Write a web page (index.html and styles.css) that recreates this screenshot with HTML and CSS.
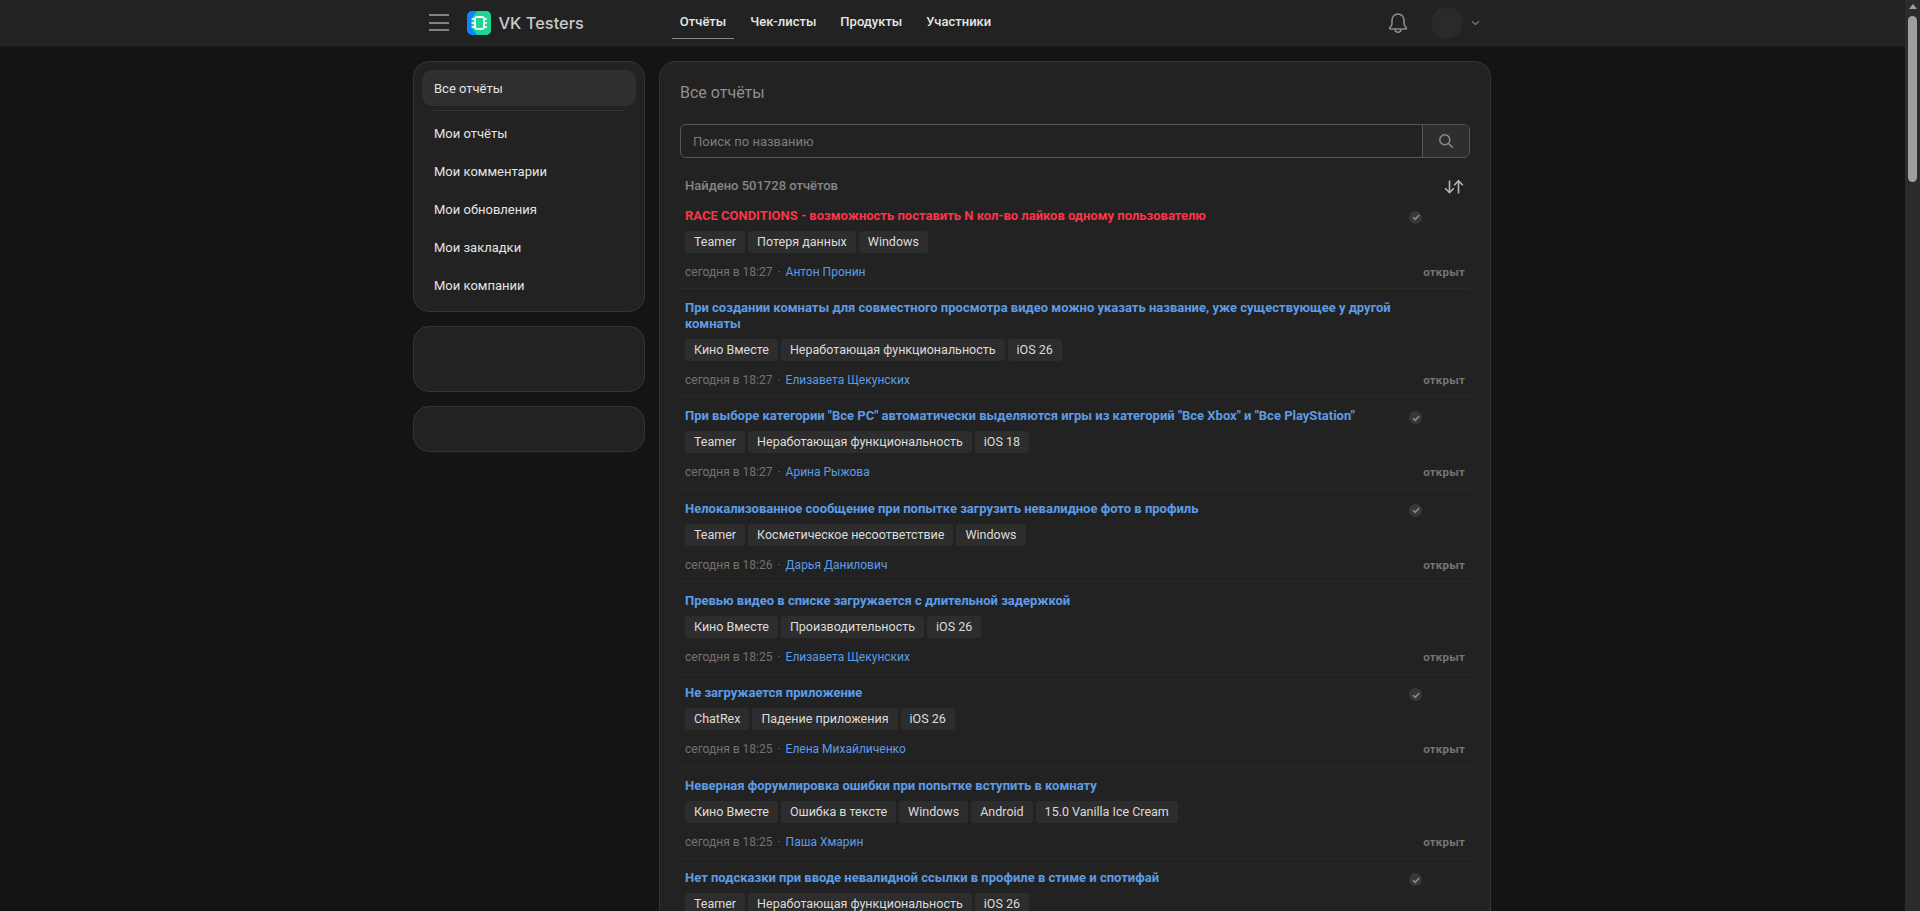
FILE: index.html
```html
<!DOCTYPE html>
<html lang="ru">
<head>
<meta charset="utf-8">
<title>VK Testers</title>
<link rel="stylesheet" href="styles.css">
</head>
<body>
<div class="viewport">
  <div class="page">
    <header class="topbar">
      <div class="topbar-inner">
        <button class="burger" aria-label="Меню"><span></span><span></span><span></span></button>
        <a class="brand">
          <svg class="logo" viewBox="0 0 24 24" width="24" height="24">
            <defs><clipPath id="lc"><rect width="24" height="24" rx="5"/></clipPath></defs>
            <g clip-path="url(#lc)">
              <rect width="24" height="24" fill="#0a84ff"/>
              <circle cx="19" cy="12" r="14.5" fill="#1ed68f"/>
            </g>
            <rect x="8" y="6" width="9" height="12" rx="2" fill="none" stroke="#fff" stroke-width="1.8"/>
            <path d="M4.5 8h3M4.5 12h3M4.5 16h3M17 8h3M17 12h3M17 16h3" stroke="#fff" stroke-width="1.6"/>
          </svg>
          <span class="brand-name">VK Testers</span>
        </a>
        <nav class="nav">
          <a class="nav-link active">Отчёты</a>
          <a class="nav-link">Чек-листы</a>
          <a class="nav-link">Продукты</a>
          <a class="nav-link">Участники</a>
        </nav>
        <div class="top-actions">
          <svg class="bell" viewBox="0 0 20 22" width="20" height="22" fill="none" stroke="#8c8c8c" stroke-width="1.6" stroke-linejoin="round">
            <path d="M10 2a6 6 0 0 0-6 6v3.6c0 1.6-1.1 3-2.3 4.2-.4.4-.1 1.2.5 1.2h15.6c.6 0 .9-.8.5-1.2-1.2-1.2-2.3-2.6-2.3-4.2V8a6 6 0 0 0-6-6Z"/>
            <path d="M7 17.2c0 1.8 1.3 3 3 3s3-1.2 3-3"/>
          </svg>
          <div class="avatar"></div>
          <svg class="chev" viewBox="0 0 10 6" width="9" height="6" fill="none" stroke="#777" stroke-width="1.3"><path d="M1 1l4 3.6L9 1"/></svg>
        </div>
      </div>
    </header>
    <div class="layout">
      <aside class="side">
        <div class="card side-menu">
          <a class="side-item current">Все отчёты</a>
          <div class="side-sep"></div>
          <a class="side-item">Мои отчёты</a>
          <a class="side-item">Мои комментарии</a>
          <a class="side-item">Мои обновления</a>
          <a class="side-item">Мои закладки</a>
          <a class="side-item">Мои компании</a>
        </div>
        <div class="card side-blank-a"></div>
        <div class="card side-blank-b"></div>
      </aside>
      <main class="card main">
        <h1 class="heading">Все отчёты</h1>
        <form class="search">
          <div class="search-input">Поиск по названию</div>
          <div class="search-btn">
            <svg viewBox="0 0 16 16" width="16" height="16" fill="none" stroke="#8e8e8e" stroke-width="1.4"><circle cx="6.8" cy="6.8" r="5"/><path d="M10.5 10.5l4.3 4.3"/></svg>
          </div>
        </form>
        <div class="found">
          <span>Найдено 501728 отчётов</span>
          <svg class="sort" viewBox="0 0 20 14" width="20" height="14" fill="none" stroke="#b5b5b5" stroke-width="1.6"><path d="M5.5 0.5v12M1.2 8.2l4.3 4.5 4.3-4.5M14.5 13.5v-12.5M10.2 5.3l4.3-4.5 4.3 4.5"/></svg>
        </div>
        <ul class="reports">
          <li class="report">
            <div class="report-body">
              <a class="r-title urgent">RACE CONDITIONS - возможность поставить N кол-во лайков одному пользователю</a>
              <div class="tags"><span class="tag">Teamer</span><span class="tag">Потеря данных</span><span class="tag">Windows</span></div>
              <div class="meta"><span class="when">сегодня в 18:27</span><span class="dot">·</span><a class="author">Антон Пронин</a></div>
            </div>
            <div class="r-side"><span class="check"><svg viewBox="0 0 12 12" width="12" height="12"><path d="M3 6.2l2.2 2.2L9.2 4" fill="none" stroke="#8a8a8a" stroke-width="1.6"/></svg></span><span class="status">открыт</span></div>
          </li>
          <li class="report">
            <div class="report-body">
              <a class="r-title">При создании комнаты для совместного просмотра видео можно указать название, уже существующее у другой комнаты</a>
              <div class="tags"><span class="tag">Кино Вместе</span><span class="tag">Неработающая функциональность</span><span class="tag">iOS 26</span></div>
              <div class="meta"><span class="when">сегодня в 18:27</span><span class="dot">·</span><a class="author">Елизавета Щекунских</a></div>
            </div>
            <div class="r-side"><span class="status">открыт</span></div>
          </li>
          <li class="report">
            <div class="report-body">
              <a class="r-title">При выборе категории "Все PC" автоматически выделяются игры из категорий "Все Xbox" и "Все PlayStation"</a>
              <div class="tags"><span class="tag">Teamer</span><span class="tag">Неработающая функциональность</span><span class="tag">iOS 18</span></div>
              <div class="meta"><span class="when">сегодня в 18:27</span><span class="dot">·</span><a class="author">Арина Рыжова</a></div>
            </div>
            <div class="r-side"><span class="check"><svg viewBox="0 0 12 12" width="12" height="12"><path d="M3 6.2l2.2 2.2L9.2 4" fill="none" stroke="#8a8a8a" stroke-width="1.6"/></svg></span><span class="status">открыт</span></div>
          </li>
          <li class="report">
            <div class="report-body">
              <a class="r-title">Нелокализованное сообщение при попытке загрузить невалидное фото в профиль</a>
              <div class="tags"><span class="tag">Teamer</span><span class="tag">Косметическое несоответствие</span><span class="tag">Windows</span></div>
              <div class="meta"><span class="when">сегодня в 18:26</span><span class="dot">·</span><a class="author">Дарья Данилович</a></div>
            </div>
            <div class="r-side"><span class="check"><svg viewBox="0 0 12 12" width="12" height="12"><path d="M3 6.2l2.2 2.2L9.2 4" fill="none" stroke="#8a8a8a" stroke-width="1.6"/></svg></span><span class="status">открыт</span></div>
          </li>
          <li class="report">
            <div class="report-body">
              <a class="r-title">Превью видео в списке загружается с длительной задержкой</a>
              <div class="tags"><span class="tag">Кино Вместе</span><span class="tag">Производительность</span><span class="tag">iOS 26</span></div>
              <div class="meta"><span class="when">сегодня в 18:25</span><span class="dot">·</span><a class="author">Елизавета Щекунских</a></div>
            </div>
            <div class="r-side"><span class="status">открыт</span></div>
          </li>
          <li class="report">
            <div class="report-body">
              <a class="r-title">Не загружается приложение</a>
              <div class="tags"><span class="tag">ChatRex</span><span class="tag">Падение приложения</span><span class="tag">iOS 26</span></div>
              <div class="meta"><span class="when">сегодня в 18:25</span><span class="dot">·</span><a class="author">Елена Михайличенко</a></div>
            </div>
            <div class="r-side"><span class="check"><svg viewBox="0 0 12 12" width="12" height="12"><path d="M3 6.2l2.2 2.2L9.2 4" fill="none" stroke="#8a8a8a" stroke-width="1.6"/></svg></span><span class="status">открыт</span></div>
          </li>
          <li class="report">
            <div class="report-body">
              <a class="r-title">Неверная форумлировка ошибки при попытке вступить в комнату</a>
              <div class="tags"><span class="tag">Кино Вместе</span><span class="tag">Ошибка в тексте</span><span class="tag">Windows</span><span class="tag">Android</span><span class="tag">15.0 Vanilla Ice Cream</span></div>
              <div class="meta"><span class="when">сегодня в 18:25</span><span class="dot">·</span><a class="author">Паша Хмарин</a></div>
            </div>
            <div class="r-side"><span class="status">открыт</span></div>
          </li>
          <li class="report">
            <div class="report-body">
              <a class="r-title">Нет подсказки при вводе невалидной ссылки в профиле в стиме и спотифай</a>
              <div class="tags"><span class="tag">Teamer</span><span class="tag">Неработающая функциональность</span><span class="tag">iOS 26</span></div>
            </div>
            <div class="r-side"><span class="check"><svg viewBox="0 0 12 12" width="12" height="12"><path d="M3 6.2l2.2 2.2L9.2 4" fill="none" stroke="#8a8a8a" stroke-width="1.6"/></svg></span></div>
          </li>
        </ul>
      </main>
    </div>
  </div>
  <div class="scrollbar">
    <div class="sb-arrow"></div>
    <div class="sb-thumb"></div>
  </div>
</div>
</body>
</html>
```
FILE: styles.css
```css
* { box-sizing: border-box; }
html, body { margin: 0; height: 100%; overflow: hidden; }
body { background: #141414; color: #e1e3e6; font-family: Roboto, "Noto Sans", sans-serif; font-size: 13px; }
a { text-decoration: none; color: inherit; }
ul { list-style: none; margin: 0; padding: 0; }
h1 { margin: 0; font-weight: 400; }

.viewport { display: flex; height: 911px; overflow: hidden; }
.page { flex: 1; min-width: 0; }

.scrollbar { width: 15px; background: #2c2c2c; display: flex; flex-direction: column; align-items: center; flex-shrink: 0; }
.sb-arrow { margin-top: 4px; width: 0; height: 0; border-left: 4.5px solid transparent; border-right: 4.5px solid transparent; border-bottom: 5px solid #9e9e9e; }
.sb-thumb { margin-top: 7px; width: 9px; height: 166px; border-radius: 5px; background: #9e9e9e; }

.topbar { height: 46px; background: #222222; border-bottom: 1px solid #292929; }
.topbar-inner { width: 1078px; margin: 0 auto; height: 45px; display: flex; align-items: center; }

.burger { margin-left: 15px; width: 20px; height: 17px; padding: 0; background: none; border: 0; display: flex; flex-direction: column; justify-content: space-between; }
.burger span { display: block; height: 2px; background: #828282; }

.brand { margin-left: 18px; display: flex; align-items: center; gap: 8px; }
.logo { display: block; }
.brand-name { font-family: Inter, Roboto, sans-serif; font-size: 16.4px; font-weight: 500; color: #c9c9c9; }

.nav { margin-left: 88px; display: flex; gap: 8px; height: 45px; }
.nav-link { padding: 0 8px; font-size: 13px; font-weight: 500; color: #e6e6e6; line-height: 44px; height: 39px; }
.nav-link.active { border-bottom: 1px solid #8a8a8a; }

.top-actions { margin-left: auto; margin-right: 12px; display: flex; align-items: center; }
.bell { display: block; }
.avatar { margin-left: 23px; width: 32px; height: 32px; border-radius: 50%; background: #2a2a2a; }
.chev { margin-left: 8px; display: block; }

.layout { width: 1079px; padding-right: 1px; margin: 15px auto 0; display: flex; gap: 14px; align-items: flex-start; }
.side { width: 232px; flex-shrink: 0; display: flex; flex-direction: column; gap: 14px; }
.card { background: #222222; border: 1px solid #353535; border-radius: 16px; }

.side-menu { padding: 8px 8px 6px; height: 251px; }
.side-blank-a { height: 66px; }
.side-blank-b { height: 46px; }
.side-item { display: block; height: 38px; padding-left: 12px; font-size: 13px; line-height: 40px; color: #e4e4e4; }
.side-item.current { height: 36px; line-height: 38px; border-radius: 10px; background: #2f2f2f; }
.side-sep { height: 1px; margin: 4px 12px 3px; background: #333333; }

.main { flex: 1; min-width: 0; padding: 0 20px; height: 900px; }
.heading { padding-top: 21px; font-size: 16px; line-height: 20px; color: #8f8f8f; }

.search { margin-top: 21px; height: 34px; display: flex; border: 1px solid #565656; border-radius: 6px; }
.search-input { flex: 1; padding-left: 12px; line-height: 33px; font-size: 13px; color: #7d7d7d; }
.search-btn { width: 47px; border-left: 1px solid #565656; background: #2e2e2e; border-radius: 0 5px 5px 0; display: flex; align-items: center; justify-content: center; }

.found { margin-top: 19px; padding: 0 6px 0 5px; height: 16px; display: flex; justify-content: space-between; align-items: center; font-size: 13px; font-weight: 500; color: #868686; }
.sort { display: block; margin-top: 3px; }

.reports { margin-top: 4px; }
.report { display: flex; padding: 10.8px 5px 8.5px; border-bottom: 1px solid #2a2a2a; }
.report-body { width: 716px; flex-shrink: 0; }
.r-title { display: block; font-size: 13px; font-weight: 700; line-height: 15.6px; color: #5c9ce6; }
.r-title.urgent { color: #ff3347; }
.tags { margin-top: 7.5px; display: flex; gap: 3px; }
.tag { height: 22px; padding: 0 9px; border-radius: 3px; background: #2d2d2d; font-size: 12.5px; line-height: 22px; color: #dcdcdc; }
.meta { margin-top: 11px; font-size: 12px; line-height: 16px; display: flex; }
.when { color: #737373; }
.dot { margin: 0 5px; color: #656565; }
.author { color: #5c9ce6; }

.r-side { flex: 1; position: relative; }
.check { position: absolute; left: 8px; top: 3px; width: 13px; height: 13px; border-radius: 50%; background: #36373b; display: flex; align-items: center; justify-content: center; }
.status { position: absolute; right: 0; bottom: 0; font-size: 11.5px; font-weight: 700; line-height: 16px; color: #757575; letter-spacing: .2px; }
```
